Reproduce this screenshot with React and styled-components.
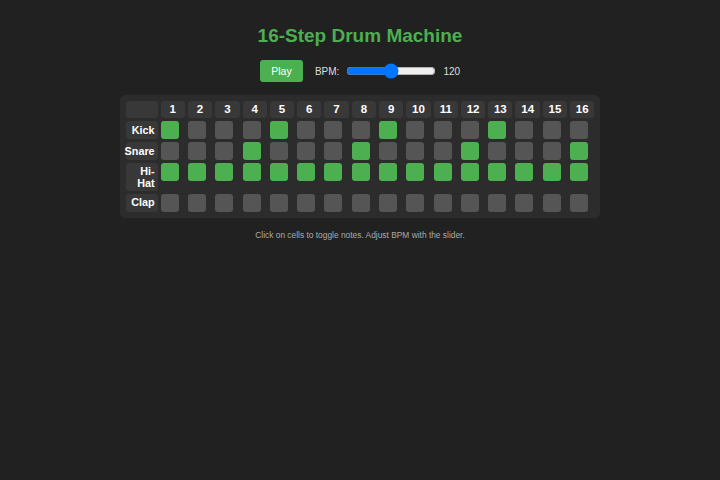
import React, { useState } from 'react'
import styled, { createGlobalStyle } from 'styled-components'

const GlobalStyle = createGlobalStyle`
	html, body {
		margin: 0;
		padding: 0;
		background: #212121;
		font-family: "Liberation Sans", Arial, sans-serif;
		color: #ddd;
	}
`

const Page = styled.div`
	display: flex;
	flex-direction: column;
	align-items: center;
	padding-top: 23px;
	min-height: 480px;
	box-sizing: border-box;
`

const Title = styled.h1`
	margin: 0;
	font-size: 19px;
	font-weight: bold;
	color: #4caf50;
	line-height: 26px;
`

const Controls = styled.div`
	display: flex;
	align-items: center;
	gap: 12px;
	margin-top: 11px;
	font-size: 10px;
	color: #ddd;
`

const PlayButton = styled.button`
	width: 43px;
	height: 22px;
	border: none;
	border-radius: 3px;
	background: #4caf50;
	color: #fff;
	font-family: inherit;
	font-size: 10.5px;
	cursor: pointer;
`

const BpmGroup = styled.label`
	display: flex;
	align-items: center;
	gap: 7px;
`

const Slider = styled.input`
	width: 90px;
	margin: 0;
	accent-color: #0075ff;
`

const Board = styled.div`
	display: grid;
	grid-template-columns: 32px repeat(16, 24.3px);
	gap: 3px;
	align-items: start;
	margin-top: 13px;
	padding: 6px;
	background: #2c2c2c;
	border-radius: 5px;
`

const Head = styled.div`
	height: 17px;
	line-height: 17px;
	text-align: center;
	background: #383838;
	border-radius: 3px;
	color: #fff;
	font-size: 11.5px;
	font-weight: bold;
`

const Label = styled.div`
	display: flex;
	align-items: center;
	justify-content: flex-end;
	box-sizing: border-box;
	min-height: 18px;
	padding: 1.5px 3px 1.5px 0;
	line-height: 12.3px;
	text-align: right;
	background: #383838;
	border-radius: 3px;
	color: #fff;
	font-size: 10.8px;
	font-weight: bold;
`

const Cell = styled.button`
	width: 18px;
	height: 18px;
	padding: 0;
	border: none;
	border-radius: 3px;
	background: ${p => (p.$on ? '#4caf50' : '#555')};
	cursor: pointer;
`

const Hint = styled.p`
	margin: 12px 0 0;
	font-size: 8.4px;
	line-height: 10px;
	color: #aaa;
`

const tracks = [
	{ name: 'Kick', steps: [1, 5, 9, 13] },
	{ name: 'Snare', steps: [4, 8, 12, 16] },
	{ name: 'Hi-Hat', steps: [1, 2, 3, 4, 5, 6, 7, 8, 9, 10, 11, 12, 13, 14, 15, 16] },
	{ name: 'Clap', steps: [] },
]

const makeGrid = () =>
	tracks.map(t => Array.from({ length: 16 }, (_, i) => t.steps.includes(i + 1)))

export default function App() {
	const [grid, setGrid] = useState(makeGrid)
	const [bpm, setBpm] = useState(120)

	const toggle = (r, c) =>
		setGrid(g => g.map((row, ri) => (ri === r ? row.map((v, ci) => (ci === c ? !v : v)) : row)))

	return (
		<Page>
			<GlobalStyle />
			<Title>16-Step Drum Machine</Title>
			<Controls>
				<PlayButton>Play</PlayButton>
				<BpmGroup>
					BPM:
					<Slider type="range" min="60" max="180" value={bpm} onChange={e => setBpm(+e.target.value)} />
					<span>{bpm}</span>
				</BpmGroup>
			</Controls>
			<Board>
				<Head />
				{Array.from({ length: 16 }, (_, i) => (
					<Head key={i}>{i + 1}</Head>
				))}
				{tracks.map((t, r) => (
					<React.Fragment key={t.name}>
						<Label>{t.name}</Label>
						{grid[r].map((on, c) => (
							<Cell key={c} $on={on} onClick={() => toggle(r, c)} />
						))}
					</React.Fragment>
				))}
			</Board>
			<Hint>Click on cells to toggle notes. Adjust BPM with the slider.</Hint>
		</Page>
	)
}
